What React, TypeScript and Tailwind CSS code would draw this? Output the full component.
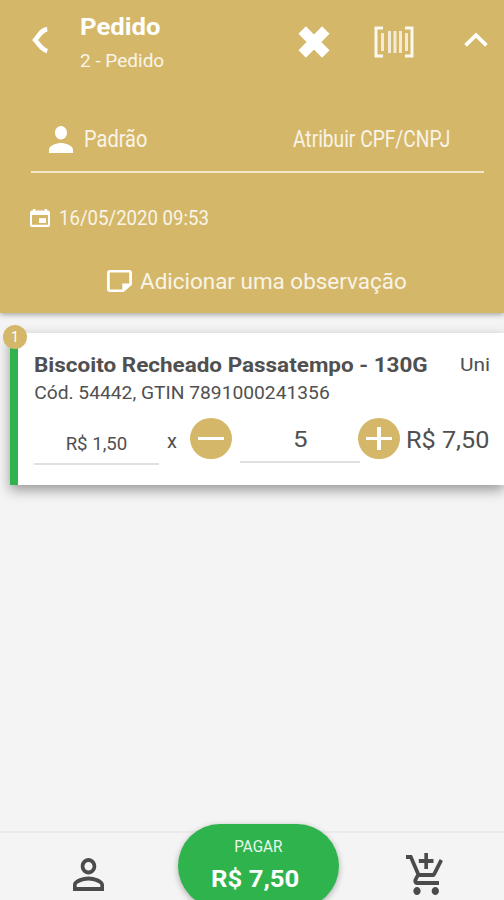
import React from 'react';

interface IconProps {
  className?: string;
}

const BackIcon: React.FC<IconProps> = ({ className }) => (
  <svg viewBox="0 0 16 28" className={className} fill="none" stroke="currentColor" strokeWidth="4.8">
    <path d="M15.500 2.500 C9 3 7 9 3 13.500 C7 18 9 23 15.500 25" />
  </svg>
);

const ClearIcon: React.FC<IconProps> = ({ className }) => (
  <svg viewBox="0 0 32 34" className={className} fill="none" stroke="currentColor" strokeWidth="10.4">
    <path d="M4.200 5 L27.800 29 M27.800 5 L4.200 29" />
  </svg>
);

const BarcodeIcon: React.FC<IconProps> = ({ className }) => (
  <svg viewBox="0 0 40 32" className={className} fill="none" stroke="currentColor">
    <path d="M9 2 H2 V30 H9 M31 2 H38 V30 H31" strokeWidth="3" />
    <path d="M8.500 7 V25 M15.500 5 V27 M21 5 V27 M26.500 5 V27 M32.500 7 V25" strokeWidth="3" opacity=".8" />
  </svg>
);

const CollapseIcon: React.FC<IconProps> = ({ className }) => (
  <svg viewBox="0 0 24 16" className={className} fill="none" stroke="currentColor" strokeWidth="3.8">
    <path d="M1.600 13.300 L12 3.200 L22.400 13.300" />
  </svg>
);

const PersonIcon: React.FC<IconProps> = ({ className }) => (
  <svg viewBox="4 4 16 16" preserveAspectRatio="none" className={className} fill="currentColor">
    <path d="M12 12c2.210 0 4-1.790 4-4s-1.790-4-4-4-4 1.790-4 4 1.790 4 4 4zm0 2c-2.670 0-8 1.340-8 4v2h16v-2c0-2.660-5.330-4-8-4z" />
  </svg>
);

const CalendarIcon: React.FC<IconProps> = ({ className }) => (
  <svg viewBox="0 0 20 18" className={className} fill="currentColor">
    <path
      fillRule="evenodd"
      d="M3 0h2.400v1.400h9.200V0H17v1.400h1a2 2 0 0 1 2 2V16a2 2 0 0 1-2 2H2a2 2 0 0 1-2-2V3.400a2 2 0 0 1 2-2h1zM2 6v9.800h16V6z"
    />
    <path d="M9 9.200h7v4.800H9z" />
  </svg>
);

const NoteIcon: React.FC<IconProps> = ({ className }) => (
  <svg viewBox="3 3 18 18" preserveAspectRatio="none" className={className} fill="currentColor">
    <path d="M19 5v9h-5v5H5V5h14m0-2H5c-1.100 0-2 .9-2 2v14c0 1.100.9 2 2 2h10l6-6V5c0-1.100-.9-2-2-2z" />
  </svg>
);

const PersonOutlineIcon: React.FC<IconProps> = ({ className }) => (
  <svg viewBox="4 4 16 16" preserveAspectRatio="none" className={className} fill="currentColor">
    <path d="M12 5.900c1.160 0 2.100.94 2.100 2.100s-.94 2.100-2.100 2.100S9.900 9.160 9.900 8s.94-2.100 2.100-2.100m0 9c2.970 0 6.100 1.460 6.100 2.100v1.100H5.900V17c0-.64 3.130-2.100 6.100-2.100M12 4C9.790 4 8 5.790 8 8s1.790 4 4 4 4-1.790 4-4-1.790-4-4-4zm0 9c-2.670 0-8 1.340-8 4v3h16v-3c0-2.660-5.330-4-8-4z" />
  </svg>
);

const CartIcon: React.FC<IconProps> = ({ className }) => (
  <svg viewBox="1 1 20.200 21" preserveAspectRatio="none" className={className} fill="currentColor">
    <path d="M11 9h2V6h3V4h-3V1h-2v3H8v2h3v3zm-4 9c-1.100 0-1.990.9-1.990 2S5.900 22 7 22s2-.9 2-2-.9-2-2-2zm10 0c-1.100 0-1.990.9-1.990 2s.89 2 1.990 2 2-.9 2-2-.9-2-2-2zm-9.830-3.250l.03-.12.9-1.630h7.450c.75 0 1.410-.41 1.750-1.030l3.860-7.010L19.420 4h-.01l-1.100 2-2.760 5H8.530l-.13-.27L6.160 6l-.95-2-.94-2H1v2h2l3.600 7.590-1.350 2.450c-.16.28-.25.61-.25.96 0 1.100.9 2 2 2h12v-2H7.420c-.13 0-.25-.11-.25-.25z" />
  </svg>
);

const Header: React.FC = () => (
  <header className="relative z-10 h-[313px] bg-[#d4b768] text-white shadow-[0_2px_5px_rgba(0,0,0,0.3)]">
    <div className="flex h-20 items-center">
      <BackIcon className="ml-8 h-[27px] w-4" />
      <div className="ml-8 w-[218px] whitespace-nowrap">
        <h1 className="mt-[7px] h-[34px] origin-left scale-x-[1.07] text-2xl leading-[34px] font-bold">Pedido</h1>
        <p className="h-[33px] text-[19px] leading-[33px] text-white/85">2 - Pedido</p>
      </div>
      <ClearIcon className="mt-1 h-[34px] w-8" />
      <BarcodeIcon className="mt-1 ml-11 h-8 w-10 text-white/90" />
      <CollapseIcon className="ml-[50px] h-4 w-6" />
    </div>

    <div className="mr-5 ml-[31px] flex h-[93px] items-center border-b-2 border-[#f3e6cc] pt-[28px] whitespace-nowrap">
      <PersonIcon className="ml-[18px] h-[27px] w-6" />
      <span className="mt-0.5 ml-[11px] w-[209px] shrink-0 origin-left scale-x-[.87] text-[23px] text-white/85">Padrão</span>
      <span className="mt-0.5 origin-left scale-x-[.835] text-[23px] text-white/85">Atribuir CPF/CNPJ</span>
    </div>

    <div className="mt-[34px] ml-[30px] flex h-[22px] items-center whitespace-nowrap">
      <CalendarIcon className="h-[18px] w-5" />
      <span className="ml-[9px] origin-left scale-x-[.93] text-xl text-white/85">16/05/2020 09:53</span>
    </div>

    <div className="mt-[37px] ml-[107px] flex h-[30px] items-center whitespace-nowrap">
      <NoteIcon className="h-[22px] w-[25px]" />
      <span className="ml-2 origin-left scale-x-[1.02] text-[22px] text-white/85">Adicionar uma observação</span>
    </div>
  </header>
);

const OrderItem: React.FC = () => (
  <section className="relative mt-5 ml-2.5 h-[152px] border-l-8 border-[#2fb34d] bg-white whitespace-nowrap text-[#505050] shadow-[0_5px_12px_rgba(0,0,0,0.38)]">
    <span className="absolute -top-2 -left-[15px] z-20 flex h-6 w-6 items-center justify-center rounded-full bg-[#d4b768] text-sm text-white">
      1
    </span>
    <div className="flex h-8 items-center pt-8 pl-4">
      <h2 className="w-[426px] origin-left scale-x-[1.07] text-[21px] leading-7 font-bold">
        Biscoito Recheado Passatempo - 130G
      </h2>
      <span className="origin-left scale-x-110 text-[19px] leading-7">Uni</span>
    </div>
    <p className="mt-[14px] h-7 origin-left scale-x-[1.012] pl-4 text-[19px] leading-7">Cód. 54442, GTIN 7891000241356</p>
    <div className="mt-1.5 flex items-start pl-4">
      <div className="h-[52px] w-[125px] border-b-2 border-[#e0e0e0] pt-[17px] text-center text-[19px] leading-7">
        <span className="inline-block scale-x-[.98]">R$ 1,50</span>
      </div>
      <span className="mt-[14px] ml-2 text-xl leading-7">x</span>
      <button className="mt-[5px] ml-[13px] flex h-[41px] w-[42px] items-center justify-center rounded-full bg-[#d4b768]">
        <span className="h-[3px] w-[26px] bg-white" />
      </button>
      <div className="ml-2 h-[50px] w-[120px] border-b-2 border-[#e0e0e0] pt-[13px] text-center text-[22px] leading-7">
        <span className="inline-block scale-x-[1.18]">5</span>
      </div>
      <button className="mt-[5px] -ml-0.5 grid h-[41px] w-[42px] place-items-center rounded-full bg-[#d4b768]">
        <span className="col-start-1 row-start-1 h-[3px] w-[26px] bg-white" />
        <span className="col-start-1 row-start-1 h-[23px] w-1 bg-white" />
      </button>
      <span className="mt-[13px] ml-1.5 origin-left scale-x-[1.05] text-2xl leading-7">R$ 7,50</span>
    </div>
  </section>
);

const BottomBar: React.FC = () => (
  <footer className="mt-auto flex h-[69px] items-start border-t-2 border-[#ebebeb] text-[#4b4b4b]">
    <PersonOutlineIcon className="mt-[25px] ml-[73px] h-[33px] w-[31px]" />
    <button className="-mt-[9px] ml-[74px] flex h-[84px] w-[161px] shrink-0 flex-col items-center rounded-full bg-[#2fb34d] pt-3 whitespace-nowrap text-white shadow-[0_2px_6px_rgba(0,0,0,0.3)]">
      <span className="h-[22px] scale-x-[.95] text-base leading-[22px] text-white/90">PAGAR</span>
      <span className="mt-1 h-[34px] -translate-x-[3px] scale-x-[1.07] text-2xl leading-[34px] font-bold">R$ 7,50</span>
    </button>
    <CartIcon className="mt-5 ml-[67px] h-[42px] w-[37px]" />
  </footer>
);

const App: React.FC = () => (
  <div className="flex h-[900px] w-[504px] flex-col overflow-hidden bg-[#f4f4f4] font-[Roboto,sans-serif]">
    <Header />
    <OrderItem />
    <BottomBar />
  </div>
);

export default App;
